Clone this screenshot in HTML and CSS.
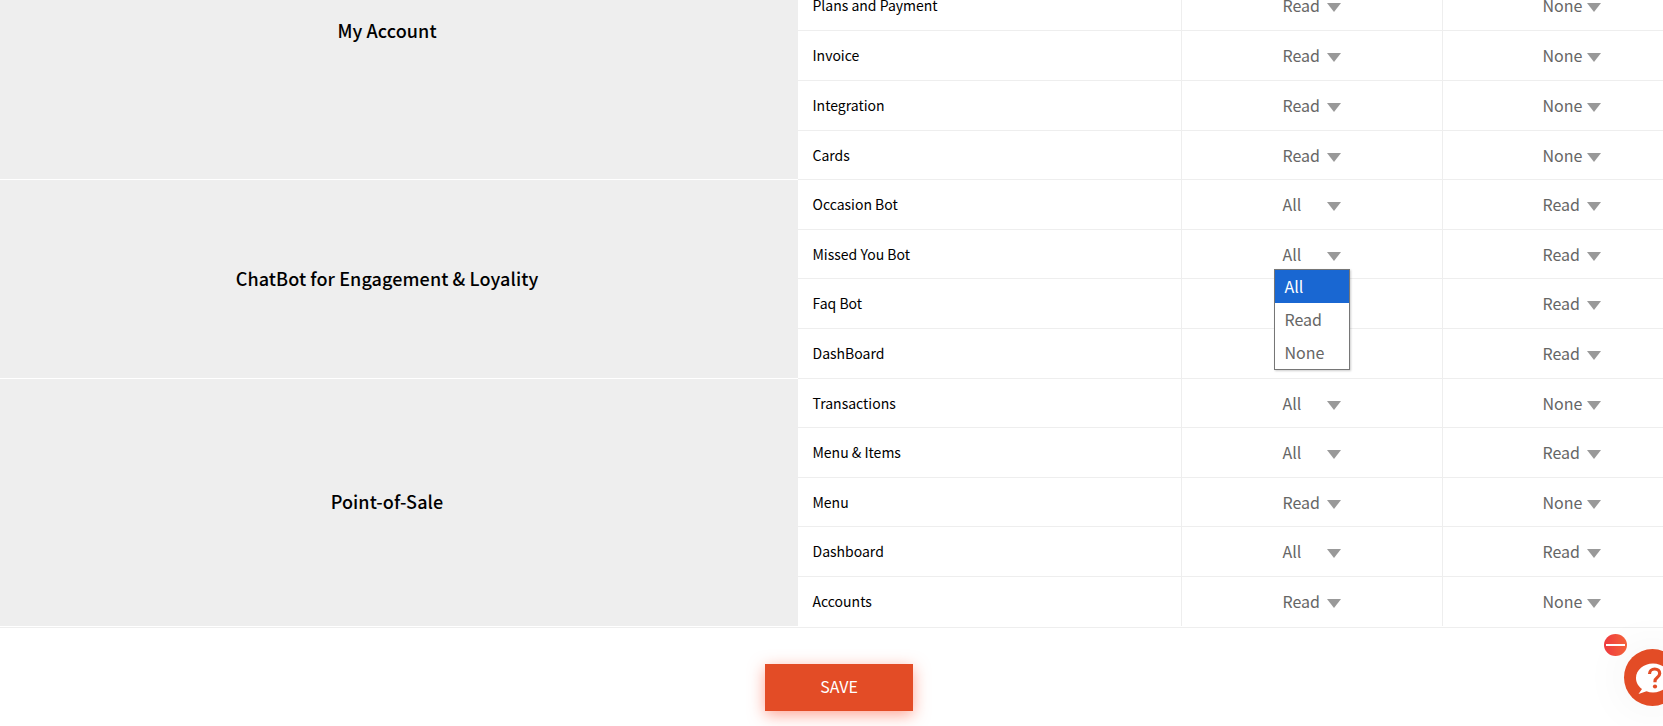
FILE: index.html
```html
<!DOCTYPE html>
<html lang="en">
<head>
    <meta charset="UTF-8">
    <meta name="viewport" content="width=device-width, initial-scale=1.0">
    <title>Role Permissions</title>
    <link rel="stylesheet" href="styles.css">
</head>
<body>
    <table class="perm-table">
        <colgroup>
            <col class="col-group">
            <col class="col-name">
            <col class="col-perm">
            <col class="col-perm">
        </colgroup>
        <tbody>
            <tr>
                <th rowspan="4" class="group-cell group-top">My Account</th>
                <td class="name-cell">Plans and Payment</td>
                <td class="perm-cell"><span class="select-box">Read</span></td>
                <td class="perm-cell"><span class="select-box">None</span></td>
            </tr>
            <tr>
                <td class="name-cell">Invoice</td>
                <td class="perm-cell"><span class="select-box">Read</span></td>
                <td class="perm-cell"><span class="select-box">None</span></td>
            </tr>
            <tr>
                <td class="name-cell">Integration</td>
                <td class="perm-cell"><span class="select-box">Read</span></td>
                <td class="perm-cell"><span class="select-box">None</span></td>
            </tr>
            <tr class="row-short">
                <td class="name-cell">Cards</td>
                <td class="perm-cell"><span class="select-box">Read</span></td>
                <td class="perm-cell"><span class="select-box">None</span></td>
            </tr>
            <tr>
                <th rowspan="4" class="group-cell">ChatBot for Engagement &amp; Loyality</th>
                <td class="name-cell">Occasion Bot</td>
                <td class="perm-cell"><span class="select-box">All</span></td>
                <td class="perm-cell"><span class="select-box">Read</span></td>
            </tr>
            <tr class="row-short">
                <td class="name-cell">Missed You Bot</td>
                <td class="perm-cell">
                    <span class="select-box">All
                        <ul class="select-menu">
                            <li class="selected">All</li>
                            <li>Read</li>
                            <li>None</li>
                        </ul>
                    </span>
                </td>
                <td class="perm-cell"><span class="select-box">Read</span></td>
            </tr>
            <tr>
                <td class="name-cell">Faq Bot</td>
                <td class="perm-cell"></td>
                <td class="perm-cell"><span class="select-box">Read</span></td>
            </tr>
            <tr>
                <td class="name-cell">DashBoard</td>
                <td class="perm-cell"></td>
                <td class="perm-cell"><span class="select-box">Read</span></td>
            </tr>
            <tr class="row-short">
                <th rowspan="5" class="group-cell group-last">Point-of-Sale</th>
                <td class="name-cell">Transactions</td>
                <td class="perm-cell"><span class="select-box">All</span></td>
                <td class="perm-cell"><span class="select-box">None</span></td>
            </tr>
            <tr>
                <td class="name-cell">Menu &amp; Items</td>
                <td class="perm-cell"><span class="select-box">All</span></td>
                <td class="perm-cell"><span class="select-box">Read</span></td>
            </tr>
            <tr class="row-short">
                <td class="name-cell">Menu</td>
                <td class="perm-cell"><span class="select-box">Read</span></td>
                <td class="perm-cell"><span class="select-box">None</span></td>
            </tr>
            <tr>
                <td class="name-cell">Dashboard</td>
                <td class="perm-cell"><span class="select-box">All</span></td>
                <td class="perm-cell"><span class="select-box">Read</span></td>
            </tr>
            <tr class="row-last">
                <td class="name-cell">Accounts</td>
                <td class="perm-cell"><span class="select-box">Read</span></td>
                <td class="perm-cell"><span class="select-box">None</span></td>
            </tr>
        </tbody>
    </table>

    <div class="save-bar">
        <button type="button" class="save-btn">SAVE</button>
    </div>

    <div class="chat-widget">
        <span class="chat-close"></span>
        <span class="chat-bubble">
            <svg class="chat-icon" width="36" height="34" viewBox="0 0 36 34">
                <path d="M18 .5C8.600.5 1 7 1 15c0 4.400 2.300 8.400 6 11l-3.500 5 8-2.700c2 .8 4.200 1.200 6.500 1.200 9.400 0 17-6.500 17-14.500S27.400.5 18 .5z" fill="#fff"/>
                <path d="M14.500 11c0-3 2.400-5 5.200-5 3 0 5 1.800 5 4.500 0 2-1 3-2.700 4.300-1.500 1.100-2 1.800-2 3.500v1" fill="none" stroke="#e34c26" stroke-width="3.200"/>
                <circle cx="20" cy="23.500" r="2.100" fill="#e34c26"/>
            </svg>
        </span>
    </div>
</body>
</html>
```

FILE: styles.css
```css
* {
    margin: 0;
    padding: 0;
    box-sizing: border-box;
    font-family: 'Noto Sans CJK KR', 'Noto Sans', sans-serif;
}

html, body {
    height: 100%;
    overflow: hidden;
    background-color: #fff;
}

/* page is photographed scrolled down, first row is cut off */
.perm-table {
    width: 100%;
    margin-top: -20px;
    table-layout: fixed;
    border-collapse: collapse;
}

.col-group {
    width: 798px;
}

.col-name {
    width: 383px;
}

.col-perm:last-child {
    width: 221px;
}

.perm-table tr {
    height: 50px;
}

.perm-table .row-short {
    height: 49px;
}

.group-cell {
    padding: 0 24px 2px 0;
    background-color: #eee;
    border-bottom: 1px solid #fff;
    color: #000;
    font-size: 18px;
    font-weight: 500;
    letter-spacing: 0.1px;
    text-align: center;
    vertical-align: middle;
}

.group-top {
    vertical-align: top;
    padding-top: 37px;
}

.name-cell {
    padding-left: 14.5px;
    border-bottom: 1px solid #eee;
    color: #000;
    font-size: 14px;
}

.perm-cell {
    padding-left: 101px;
    border-bottom: 1px solid #eee;
    border-left: 1px solid #eee;
}

.perm-cell:last-child {
    padding-left: 100px;
}

.row-last .name-cell,
.row-last .perm-cell {
    border-bottom-color: #fff;
}

.select-box {
    display: block;
    position: relative;
    width: 58px;
    color: #666;
    font-size: 16px;
}

.select-box::after {
    content: "";
    position: absolute;
    right: 0;
    top: 10px;
    border-top: 9px solid #999;
    border-left: 7px solid transparent;
    border-right: 7px solid transparent;
}

.select-menu {
    position: absolute;
    z-index: 5;
    left: -9px;
    top: 27px;
    width: 76px;
    list-style: none;
    background-color: #fff;
    border: 1px solid #767676;
    box-shadow: 1px 1px 2px rgba(0, 0, 0, 0.2);
}

.select-menu li {
    height: 33px;
    padding-left: 10px;
    line-height: 33px;
}

.select-menu .selected {
    background-color: #1967d2;
    color: #fff;
}

.save-bar {
    display: flex;
    justify-content: center;
    padding: 36px 0 0 15px;
    border-top: 1px solid #eee;
}

.save-btn {
    width: 148px;
    height: 47px;
    padding-bottom: 2px;
    background-color: #e34c26;
    color: #fff;
    border: none;
    font-size: 16px;
    cursor: pointer;
    box-shadow: 0 4px 16px rgba(255, 90, 60, 0.55);
}

.chat-widget {
    position: fixed;
    right: -18px;
    bottom: 20px;
    width: 57px;
    height: 57px;
}

.chat-bubble {
    display: flex;
    justify-content: center;
    align-items: center;
    width: 57px;
    height: 57px;
    border-radius: 50%;
    background-color: #e34c26;
    box-shadow: 0 0 50px rgba(0, 0, 0, 0.06);
}

.chat-icon {
    margin-top: 4px;
}

.chat-close {
    position: absolute;
    left: -20px;
    top: -15px;
    width: 23px;
    height: 22px;
    border-radius: 50%;
    background: linear-gradient(90deg, #ee3a3f, #f4633a);
}

.chat-close::after {
    content: "";
    position: absolute;
    left: 2px;
    right: 2px;
    top: 10px;
    height: 2px;
    background-color: #fff;
}
```
